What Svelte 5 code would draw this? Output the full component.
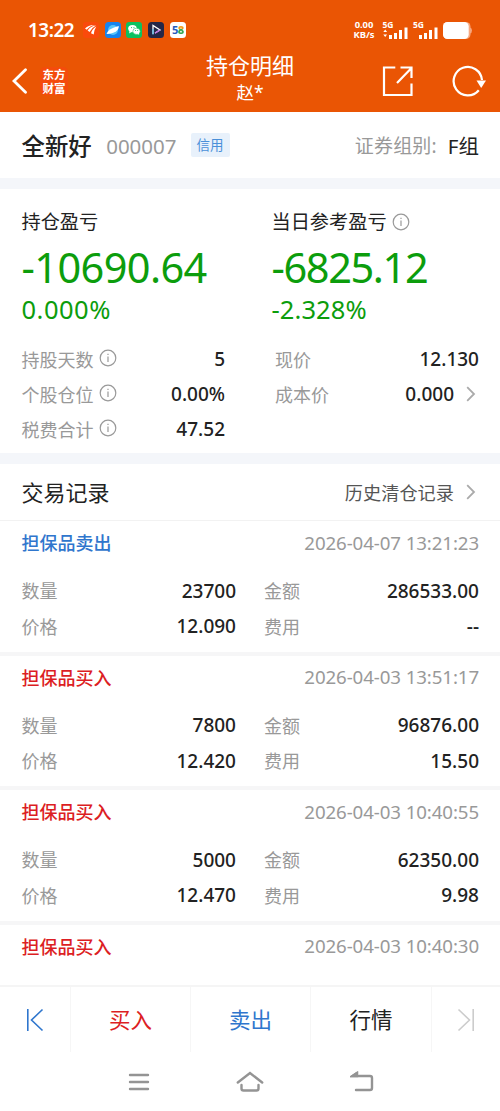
<script lang="ts">
  type Trade = {
    side: 'buy' | 'sell';
    label: string;
    time: string;
    quantity?: string;
    amount?: string;
    price?: string;
    fee?: string;
  };

  const leftStats = [
    { label: '持股天数', value: '5' },
    { label: '个股仓位', value: '0.00%' },
    { label: '税费合计', value: '47.52' },
  ];

  const rightStats = [
    { label: '现价', value: '12.130', link: false },
    { label: '成本价', value: '0.000', link: true },
  ];

  const trades: Trade[] = [
    {
      side: 'sell',
      label: '担保品卖出',
      time: '2026-04-07 13:21:23',
      quantity: '23700',
      amount: '286533.00',
      price: '12.090',
      fee: '--',
    },
    {
      side: 'buy',
      label: '担保品买入',
      time: '2026-04-03 13:51:17',
      quantity: '7800',
      amount: '96876.00',
      price: '12.420',
      fee: '15.50',
    },
    {
      side: 'buy',
      label: '担保品买入',
      time: '2026-04-03 10:40:55',
      quantity: '5000',
      amount: '62350.00',
      price: '12.470',
      fee: '9.98',
    },
    { side: 'buy', label: '担保品买入', time: '2026-04-03 10:40:30' },
  ];
</script>

{#snippet info()}
  <svg class="info" viewBox="0 0 18 18" width="18" height="18">
    <circle cx="9" cy="9" r="7.8" />
    <path d="M9 7.6v5.4M9 4.7v1.3" />
  </svg>
{/snippet}

{#snippet chevron()}
  <svg class="chevron" viewBox="0 0 10 16" width="10" height="16">
    <path d="M1.2 1.2 8 8l-6.8 6.8" />
  </svg>
{/snippet}

<div class="screen">
  <header>
    <div class="status">
      <span class="clock">13:22</span>
      <div class="apps">
        <svg viewBox="0 0 16 16">
          <rect width="16" height="16" rx="3" fill="#fa4a0c" />
          <path d="M2 6.600Q6 2.400 12 3q-5 .6-8.300 4.800ZM4.600 8.600Q7.600 4 13 3.600 9 5.600 6.600 10ZM8 11.200Q9.400 6.600 13.300 4.500q-2.300 3.300-2.600 8Z" fill="#fff" />
        </svg>
        <svg viewBox="0 0 16 16">
          <rect width="16" height="16" rx="3.500" fill="#1684ee" />
          <circle cx="8" cy="8" r="5" fill="#58c5fa" />
          <path d="M1.500 11.800Q3 6.500 13.800 4 14 8 9 10.600 5 12.200 1.500 11.800Z" fill="#fff" />
        </svg>
        <svg viewBox="0 0 16 16">
          <rect width="16" height="16" rx="3" fill="#0bc160" />
          <ellipse cx="6.500" cy="6.600" rx="4.300" ry="3.600" fill="#fff" />
          <path d="m3.600 9-.5 2.400 2.500-1.400Z" fill="#fff" />
          <ellipse cx="10.500" cy="9.300" rx="3.700" ry="3.100" fill="#fff" stroke="#0bc160" stroke-width=".5" />
          <path d="m11 11.800 2.200 1-.4-2Z" fill="#fff" />
          <path d="M5 5.600h.9M7.500 5.600h.9M9 8.500h.8M11.300 8.500h.8" stroke="#0bc160" />
        </svg>
        <svg viewBox="0 0 16 16">
          <rect width="16" height="16" rx="3.500" fill="#252747" />
          <path d="M5 12V3.500l7 4.500-5 3" fill="none" stroke="#fff" stroke-width="1.300" />
          <path d="M5 12.500V7" stroke="#58bde9" stroke-width="1.300" />
          <path d="m12 8-5 3.300" stroke="#c06ce4" stroke-width="1.300" />
        </svg>
        <span class="app58"><i>5</i><b>8</b></span>
      </div>
      <div class="speed"><span>0.00</span><span>KB/s</span></div>
      <div class="signal first">
        <span>5G</span>
        <svg viewBox="0 0 25 12" width="25" height="12">
          <path d="M.3 5 2.200 2.500 4.100 5ZM.3 7.500 2.200 10 4.100 7.500Z" />
          <path d="M6 8h3v4H6ZM11 6h3v6h-3ZM16 3h3v9h-3ZM21.500.5h3V12h-3Z" />
        </svg>
      </div>
      <div class="signal">
        <span>5G</span>
        <svg viewBox="0 0 25 12" width="25" height="12">
          <path d="M6 8h3v4H6ZM11 6h3v6h-3ZM16 3h3v9h-3ZM21.500.5h3V12h-3Z" />
        </svg>
      </div>
      <svg class="battery" viewBox="0 0 29 17" width="29" height="17">
        <rect width="27.500" height="17" rx="4.500" fill="#f6a77f" />
        <path d="M27 5.500q2 .5 2 3t-2 3Z" fill="#f6a77f" />
        <rect width="25.700" height="17" rx="4.500" fill="#fff" />
      </svg>
    </div>

    <div class="titlebar">
      <div class="nav-left">
        <svg class="back" viewBox="0 0 16 26" width="16" height="26">
          <path d="M13.500 1.800 2 13l11.500 11.200" />
        </svg>
        <div class="logo"><span>东方</span><span>财富</span></div>
      </div>
      <div class="title">
        <h1>持仓明细</h1>
        <span>赵*</span>
      </div>
      <div class="tools">
        <svg viewBox="0 0 32 32" width="32" height="32">
          <path d="M13.300 2.500H2v27.500h27.500V18.500" />
          <path d="M15 18 29 3.500M18.500 2.500h11v10.500" />
        </svg>
        <svg viewBox="0 0 34 32" width="34" height="32">
          <path d="M26.800 25.200A14.200 14.200 0 1 1 30 15" />
          <path class="solid" d="M24.500 15.500h9.500l-4.800 7.500Z" />
        </svg>
      </div>
    </div>
  </header>

  <section class="stock">
    <h2>全新好</h2>
    <span class="code">000007</span>
    <span class="tag">信用</span>
    <span class="group">证券组别:</span>
    <span class="group-value">F组</span>
  </section>

  <section class="summary">
    <div class="profits">
      <div class="profit">
        <div class="caption">持仓盈亏</div>
        <div class="figure">-10690.64</div>
        <div class="percent">0.000%</div>
      </div>
      <div class="profit today">
        <div class="caption">当日参考盈亏 {@render info()}</div>
        <div class="figure">-6825.12</div>
        <div class="percent">-2.328%</div>
      </div>
    </div>
    <div class="stats">
      <div>
        {#each leftStats as stat}
          <div class="stat">
            <span class="label">{stat.label}</span>
            {@render info()}
            <span class="value">{stat.value}</span>
          </div>
        {/each}
      </div>
      <div>
        {#each rightStats as stat}
          <div class="stat">
            <span class="label">{stat.label}</span>
            <span class="value">{stat.value}</span>
            {#if stat.link}{@render chevron()}{/if}
          </div>
        {/each}
      </div>
    </div>
  </section>

  <section class="trades">
    <div class="trades-head">
      <h3>交易记录</h3>
      <span class="history">历史清仓记录</span>
      {@render chevron()}
    </div>
    {#each trades as trade}
      <article>
        <div class="trade-title">
          <span class={trade.side}>{trade.label}</span>
          <time>{trade.time}</time>
        </div>
        {#if trade.quantity}
          <div class="fields">
            <span class="label">数量</span>
            <span class="value">{trade.quantity}</span>
            <span class="label">金额</span>
            <span class="value">{trade.amount}</span>
            <span class="label">价格</span>
            <span class="value">{trade.price}</span>
            <span class="label">费用</span>
            <span class="value">{trade.fee}</span>
          </div>
        {/if}
      </article>
    {/each}
  </section>

  <nav class="tabs">
    <span class="sell">
      <svg viewBox="0 0 18 24" width="18" height="24"><path d="M1.800 1v22M16.500 1.500 5.500 12l11 10.500" /></svg>
    </span>
    <span class="buy">买入</span>
    <span class="sell">卖出</span>
    <span>行情</span>
    <span class="off">
      <svg viewBox="0 0 18 24" width="18" height="24"><path d="M16.200 1v22M1.500 1.500 12.500 12l-11 10.500" /></svg>
    </span>
  </nav>

  <div class="system">
    <svg viewBox="0 0 22 20" width="22" height="20"><path d="M2 3h18M2 10h18M2 17h18" /></svg>
    <svg viewBox="0 0 28 22" width="28" height="22">
      <path d="M1.800 11.500 14 2l12.200 9.500M5.500 14v3.500q0 2 2 2h13q2 0 2-2V14" />
    </svg>
    <svg viewBox="0 0 24 22" width="24" height="22">
      <path d="M7 2 2.500 5H20q2 0 2 2v10q0 2-2 2H6" />
      <path d="M7 2v3H2.500Z" />
    </svg>
  </div>
</div>

<style>
  :global(body) {
    background: #fff;
  }

  .screen {
    display: flex;
    flex-direction: column;
    width: 500px;
    height: 1111px;
    overflow: hidden;
    background: #fff;
    color: #222;
    font-family: 'Noto Sans', 'Noto Sans CJK SC', sans-serif;
    font-size: 18px;
    line-height: 1;
    white-space: nowrap;
  }

  svg {
    display: block;
    flex: none;
    fill: none;
  }

  h1,
  h2,
  h3 {
    margin: 0;
    font-weight: 400;
  }

  header {
    flex: none;
    height: 112px;
    background: #ea5504;
    color: #fff;
  }

  .status {
    display: flex;
    align-items: center;
    height: 50px;
    padding: 10px 28px 0;
    box-sizing: border-box;
  }

  .clock {
    width: 55px;
    font-size: 19px;
    font-weight: 600;
    letter-spacing: -0.5px;
  }

  .apps {
    display: flex;
    gap: 5.7px;
  }

  .apps svg {
    width: 16px;
    height: 16px;
  }

  .app58 {
    width: 16px;
    height: 16px;
    border-radius: 3.5px;
    background: #fff;
    font-size: 11px;
    font-weight: 700;
    line-height: 16px;
    text-align: center;
    letter-spacing: -0.6px;
  }

  .app58 i {
    color: #265abc;
    font-style: normal;
  }

  .app58 b {
    background: linear-gradient(#f29a18 50%, #37a852 50%);
    background-clip: text;
    color: transparent;
  }

  .speed {
    display: flex;
    flex-direction: column;
    align-items: center;
    width: 22px;
    margin-left: auto;
    font-size: 9.4px;
    font-weight: 700;
    line-height: 9.6px;
  }

  .signal {
    display: flex;
    flex-direction: column;
    width: 25px;
    margin-left: 5.5px;
    font-size: 8.5px;
    font-weight: 700;
    line-height: 8px;
  }

  .signal.first {
    margin-left: 7.5px;
  }

  .signal svg {
    margin-top: -2px;
    fill: #fff;
  }

  .battery {
    margin: 0 0 0 5px;
  }

  .titlebar {
    display: grid;
    grid-template-columns: 1fr 100px 1fr;
    height: 62px;
  }

  .nav-left {
    display: flex;
    align-items: center;
    padding-left: 12px;
  }

  .back {
    stroke: #fff;
    stroke-width: 2.8;
    stroke-linecap: round;
  }

  .logo {
    display: flex;
    flex-direction: column;
    justify-content: center;
    width: 28px;
    height: 28px;
    margin-left: 12px;
    border-radius: 5px;
    background: #f44b0c;
    font-family: 'Noto Sans CJK SC', sans-serif;
    font-size: 11.5px;
    font-weight: 700;
    line-height: 14px;
    text-align: center;
  }

  .title {
    display: flex;
    flex-direction: column;
    align-items: center;
  }

  .title h1 {
    font-size: 22px;
    line-height: 31px;
  }

  .title span {
    font-size: 17.5px;
    line-height: 23px;
  }

  .tools {
    display: flex;
    align-items: center;
    justify-content: flex-end;
    gap: 38px;
    padding-right: 14px;
  }

  .tools svg {
    stroke: #fff;
    stroke-width: 2.2;
  }

  .tools .solid {
    fill: #fff;
    stroke: none;
  }

  .stock {
    display: flex;
    flex: none;
    align-items: center;
    height: 66px;
    padding: 3px 21px 0 21.5px;
    box-sizing: border-box;
  }

  .stock h2 {
    font-size: 23.4px;
    font-weight: 500;
  }

  .code {
    margin-left: 14.5px;
    color: #999;
    font-size: 20.5px;
  }

  .tag {
    width: 39px;
    height: 24px;
    margin: -4px 0 0 14px;
    border-radius: 2px;
    background: #e8f1fb;
    color: #4a90d9;
    font-size: 13.5px;
    line-height: 25px;
    text-align: center;
  }

  .group {
    margin-left: auto;
    color: #999;
    font-size: 19px;
    letter-spacing: 0.2px;
  }

  .group-value {
    margin-left: 11px;
    font-size: 20.5px;
  }

  .summary {
    flex: none;
    height: 286px;
    border: solid #f4f6fa;
    border-width: 11px 0;
    box-sizing: border-box;
  }

  .profits {
    display: grid;
    grid-template-columns: 250px 1fr;
    padding: 18px 0 0 21.5px;
  }

  .caption {
    display: flex;
    align-items: center;
    gap: 5px;
    height: 30px;
    font-size: 19.2px;
  }

  .figure {
    color: #0c9d0c;
    font-size: 41.5px;
    line-height: 61px;
    letter-spacing: -0.6px;
  }

  .today .figure {
    letter-spacing: -1.4px;
  }

  .percent {
    color: #0c9d0c;
    font-size: 25.5px;
    line-height: 23px;
    letter-spacing: 0.5px;
  }

  .today .percent {
    letter-spacing: 0.1px;
  }

  .stats {
    display: grid;
    grid-template-columns: 203.5px 204px;
    gap: 50px;
    padding: 21px 0 0 21.5px;
  }

  .stat {
    display: flex;
    align-items: center;
    height: 35px;
  }

  .info {
    stroke: #999;
    stroke-width: 1.2;
  }

  .stat .info {
    margin: -3px 0 0 5px;
  }

  .stat .value {
    margin-left: auto;
  }

  .chevron {
    margin: -2px 3px 0 12px;
    stroke: #aaa;
    stroke-width: 1.8;
  }

  .label {
    color: #999;
    font-size: 18px;
  }

  .value {
    font-size: 19px;
    font-weight: 500;
  }

  .trades {
    flex: none;
    height: 521px;
    overflow: hidden;
  }

  .trades-head {
    display: flex;
    align-items: center;
    height: 57px;
    padding: 1px 21px 0 21.5px;
    border-bottom: 1px solid #f2f2f2;
    box-sizing: border-box;
  }

  .trades-head h3 {
    margin-top: -2px;
    font-size: 22px;
  }

  .history {
    margin: 2px 0 0 auto;
    color: #555;
    font-size: 18.2px;
  }

  article {
    height: 134.6px;
    border-bottom: 4.6px solid #f6f6f7;
    box-sizing: border-box;
  }

  .trade-title {
    display: flex;
    align-items: center;
    justify-content: space-between;
    height: 44px;
    padding: 0 21px 0 21.5px;
  }

  time {
    color: #999;
    font-size: 18.7px;
    letter-spacing: -0.1px;
  }

  .buy {
    color: #dc1e23;
  }

  .sell {
    color: #2f76cd;
  }

  .trade-title .buy,
  .trade-title .sell {
    font-weight: 500;
  }

  .fields {
    display: grid;
    grid-template-columns: 50px 164.5px 78px 1fr;
    grid-auto-rows: 35.5px;
    align-items: center;
    padding: 8.5px 21px 0 21.5px;
  }

  .fields .label:nth-child(4n + 3) {
    padding-left: 28px;
  }

  .fields .value {
    text-align: right;
  }

  .tabs {
    display: grid;
    flex: none;
    grid-template-columns: 70px 120px 120px 121px 69px;
    height: 67px;
    border-top: 2px solid #f5f5f5;
    box-sizing: border-box;
    font-size: 21.5px;
  }

  .tabs span {
    display: flex;
    align-items: center;
    justify-content: center;
    padding-top: 1px;
  }

  .tabs span + span {
    border-left: 1px solid #f6f6f6;
  }

  .tabs svg {
    stroke: currentColor;
    stroke-width: 1.6;
  }

  .off {
    color: #ccc;
  }

  .system {
    display: flex;
    flex: 1;
    align-items: center;
    justify-content: center;
    gap: 86px;
    padding-left: 1px;
  }

  .system svg {
    stroke: #949494;
    stroke-width: 2.4;
    stroke-linecap: round;
  }
</style>
